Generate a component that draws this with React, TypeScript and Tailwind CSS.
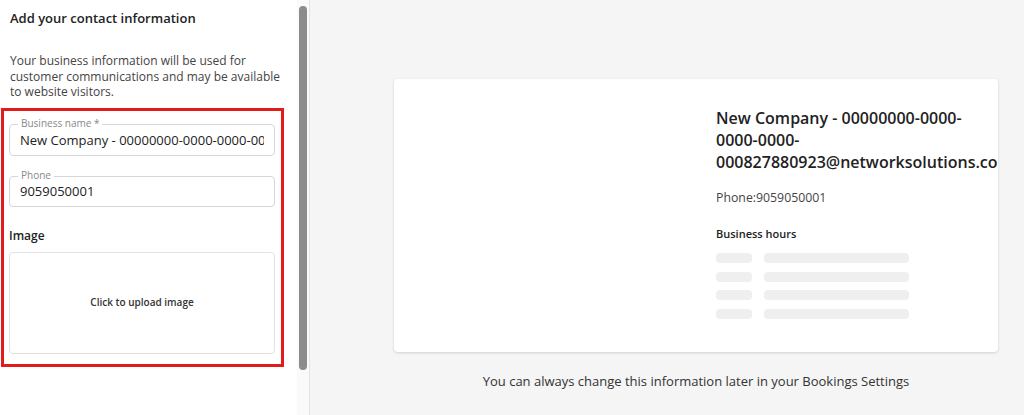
import React from "react";

export default function App() {
  const rows = [0, 1, 2, 3];
  return (
    <div className="flex h-[415px] w-[1024px] overflow-hidden font-['Open_Sans',sans-serif] text-[#333]">
      {/* Left panel */}
      <div className="w-[297px] shrink-0 bg-white pl-[1px]">
        <div className="pl-[9px] pt-[8px]">
          <h2 className="text-[13px] font-semibold leading-[20px] text-[#222]">Add your contact information</h2>
          <p className="mt-[25px] w-[280px] text-[12px] leading-[15.5px] text-[#444]">
            Your business information will be used for customer communications and may be available to website visitors.
          </p>
        </div>
        <div className="mt-[8px] w-[283px] border-[3px] border-[#e31b1b] pb-[10px] pl-[5px] pr-[6px] pt-[13px]">
          <div className="relative h-[32px] rounded-[4px] border border-[#d6d6d6] px-[10px]">
            <span className="absolute left-[8px] top-[-9px] bg-white px-[3px] text-[10px] leading-[14px] text-[#888]">
              Business name *
            </span>
            <div className="overflow-hidden whitespace-nowrap text-[13px] leading-[30px] text-[#222]">
              New Company - 00000000-0000-0000-0000-000827880923@networksolutions.com
            </div>
          </div>
          <div className="relative mt-[20px] h-[31px] rounded-[4px] border border-[#d6d6d6]">
            <span className="absolute left-[8px] top-[-9px] bg-white px-[3px] text-[10px] leading-[14px] text-[#888]">
              Phone
            </span>
            <div className="px-[10px] text-[13px] leading-[29px] text-[#222]">9059050001</div>
          </div>
          <div className="mt-[20px] text-[12px] font-semibold leading-[18px] text-[#222]">Image</div>
          <div className="mt-[7px] flex h-[102px] items-center justify-center rounded-[4px] border border-[#e2e2e2]">
            <span className="text-[10px] font-semibold text-[#333]">Click to upload image</span>
          </div>
        </div>
      </div>

      {/* Scrollbar */}
      <div className="w-[12px] shrink-0 bg-[#fafafa] pl-[2px] pt-[6px]">
        <div className="h-[364px] w-[8px] rounded-full bg-[#8c8c8c]" />
      </div>

      {/* Right panel */}
      <div className="flex-1 border-l border-[#e4e4e4] bg-[#f5f5f5] pl-[84px] pt-[79px]">
        <div className="flex h-[273px] w-[604px] overflow-hidden rounded-[4px] bg-white shadow-[0_1px_3px_rgba(0,0,0,0.15)]">
          <div className="w-[322px] shrink-0" />
          <div className="w-[270px] shrink-0 pt-[28px]">
            <div className="text-[16px] font-semibold leading-[22px] text-[#222]">
              New Company - 00000000-0000-0000-0000-000827880923@networksolutions.com
            </div>
            <div className="mt-[16px] text-[12.3px] leading-[18px] text-[#444]">Phone:9059050001</div>
            <div className="mt-[18px] text-[11px] font-semibold leading-[18px] text-[#222]">Business hours</div>
            <div className="mt-[10px] flex flex-col gap-[8.6px]">
              {rows.map((r) => (
                <div key={r} className="flex gap-[12px]">
                  <div className="h-[10px] w-[36px] rounded-[4px] bg-[#efefef]" />
                  <div className="h-[10px] w-[145px] rounded-[4px] bg-[#efefef]" />
                </div>
              ))}
            </div>
          </div>
        </div>
        <div className="mt-[20px] w-[604px] text-center text-[13px] leading-[18px] text-[#333]">
          You can always change this information later in your Bookings Settings
        </div>
      </div>
    </div>
  );
}
